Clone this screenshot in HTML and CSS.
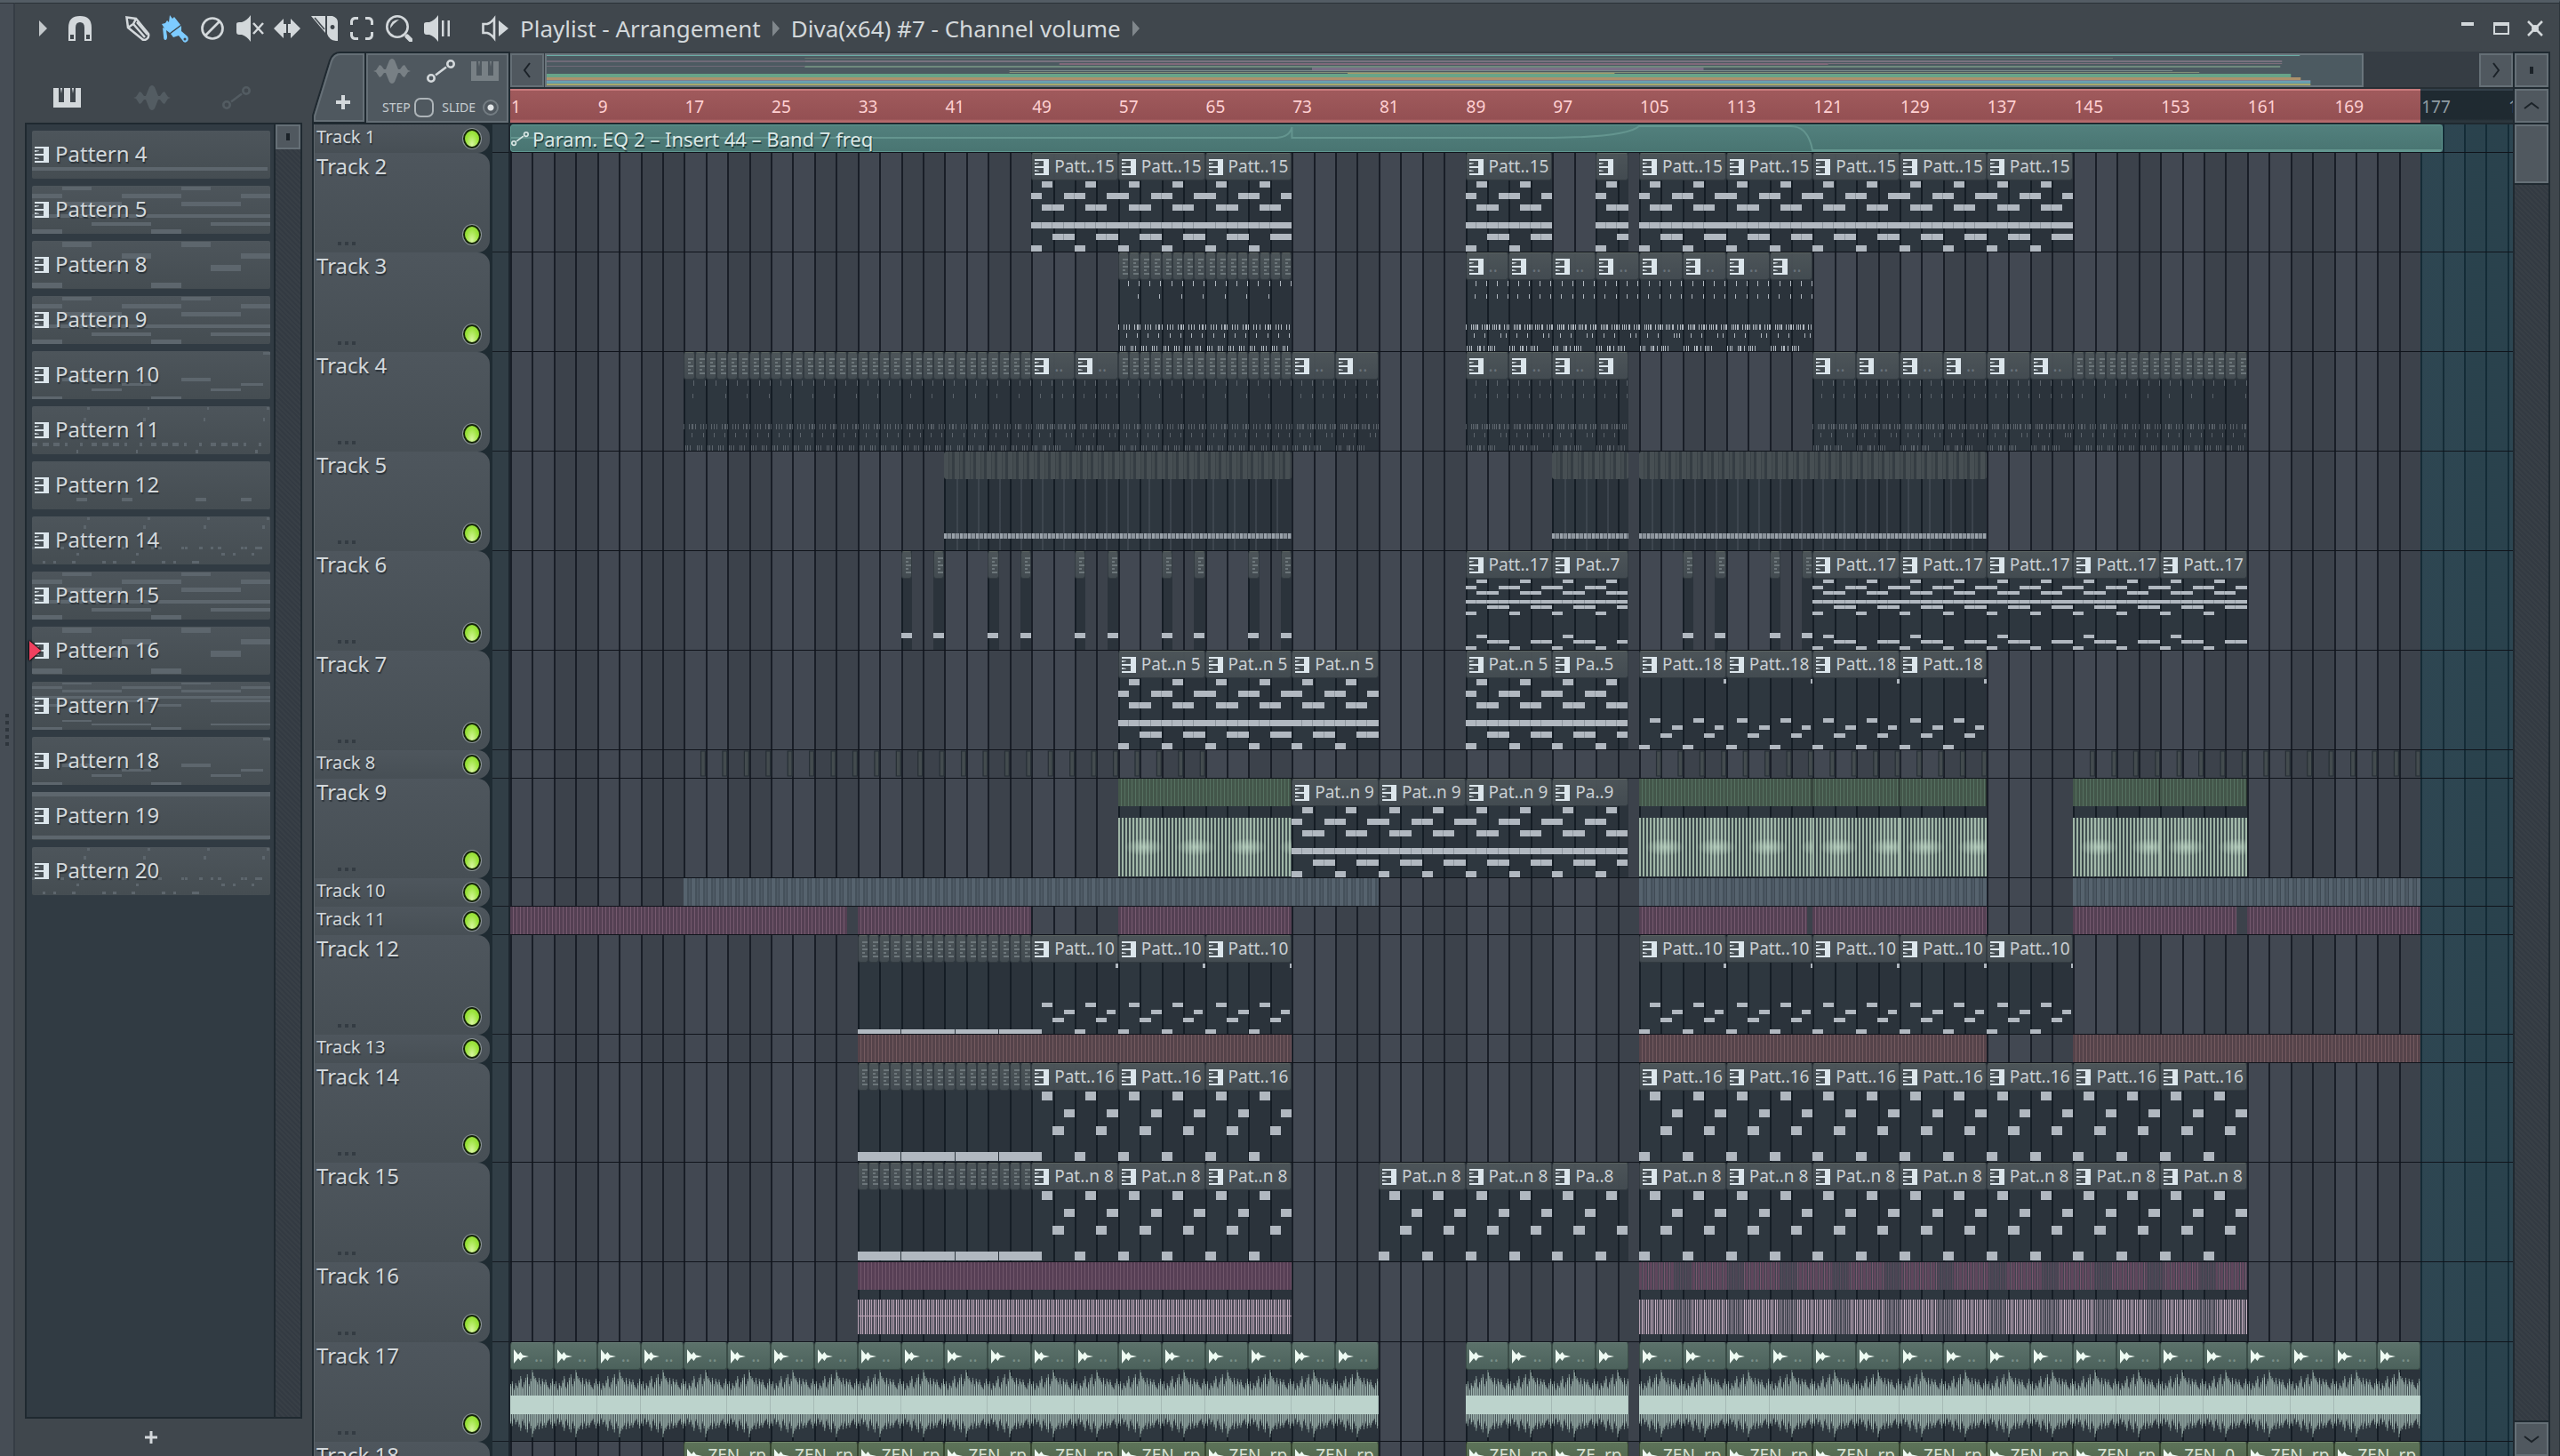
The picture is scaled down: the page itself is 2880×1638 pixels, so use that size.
FILE: index.html
```
<!DOCTYPE html>
<html lang="en">
<head>
  <meta charset="UTF-8" />
  <title>Playlist - Arrangement</title>
  <link rel="stylesheet" href="styles.css">
</head>

<body>
  <!-- shared icons -->
  <svg class="sprite" aria-hidden="true">
    <symbol id="i-keys" viewBox="0 0 16 18">
      <path d="M0 0H16V18H0V16H10V10H0V8H10V2H0z" />
      <path d="M0 4L5 4.500V5L0 6zM0 12L5 13V13.500L0 14z" />
    </symbol>
    <symbol id="i-piano" viewBox="0 0 31 22">
      <path d="M0 0H6V16H12V0H10L9 6 8 0H19V16H25V0H23L22 6 21 0H31V22H0z" />
    </symbol>
    <symbol id="i-wave" viewBox="0 0 42 28">
      <path d="M0 14L3 13 7 7 9 8 12 12 14 12 18 2Q21 -2 24 2L28 12 30 12 33 8 35 7 39 13 42 14 39 15 35 21 33 20 30 16 28 16 24 26Q21 30 18 26L14 16 12 16 9 20 7 21 3 15z" />
    </symbol>
    <symbol id="i-auto" viewBox="0 0 32 26">
      <g fill="none" stroke="currentColor" stroke-width="2.600">
        <circle cx="5" cy="21" r="3.700" /><circle cx="27" cy="5" r="3.700" /><path d="M10 17.500L22 8.500" />
      </g>
    </symbol>
    <symbol id="i-sample" viewBox="0 0 17 16">
      <path d="M0 0L5 6 7.500 3 10 6.500 17 8 10 9.500 7.500 13 5 10 0 16z" />
    </symbol>
  </svg>

  <div class="window">
    <div class="grip"><i></i><i></i><i></i><i></i><i></i></div>

    <div class="main">
      <header class="toolbar">
        <button class="tool menu" aria-label="Menu"><svg width="9" height="18"><path d="M0 0L9 9 0 18z" /></svg></button>
        <button class="tool" aria-label="Snap"><svg width="26" height="28"><path d="M0 28V13Q0 0 13 0T26 13V28H18V13Q18 7 13 7T8 13V28zM2 21V26H6V21zM20 21V26H24V21z" fill-rule="evenodd" /></svg></button>
        <div class="tool-group">
          <button class="tool" aria-label="Draw"><svg width="28" height="28" fill="none"><g fill="none" stroke="currentColor" stroke-width="2.500"><path d="M1.500 1.500L12 3 26 20Q27 24 24 26T19 26L3 13z" /><path d="M12 3L9 9 3 13M9 9L22 24M13 7L25 21" /></g></svg></button>
          <button class="tool paint" aria-label="Paint"><svg width="30" height="31"><path d="M0 10L4 9 6 6 8 8 9 0 12 4 14 2 21 11 9 20 5 17 6 24Q6 28 4 28T2 24L1 14 3 15z" /><path d="M10 21L22 12 22 18 29 24Q31 28 28 30T23 28L19 23 13 25z" /><circle cx="26" cy="27" r="1.500" fill="#40474d" /></svg></button>
          <button class="tool" aria-label="Delete"><svg width="26" height="26"><g fill="none" stroke="currentColor" stroke-width="2.700"><circle cx="13" cy="13" r="11.500" /><path d="M5 21L21 5" /></g></svg></button>
          <button class="tool" aria-label="Mute"><svg width="31" height="30"><path d="M0 10Q0 8 3 8H6Q12 6 16 0V30Q12 24 6 22H3Q0 22 0 19z" /><path d="M19 9L30 21M30 9L19 21" stroke="currentColor" stroke-width="2.500" /></svg></button>
          <button class="tool" aria-label="Slip"><svg width="30" height="24"><path d="M0 12L11 1V7H14V17H11V23zM30 12L19 1V7H16V17H19V23z" /></svg></button>
          <button class="tool" aria-label="Slice"><svg width="30" height="28"><path d="M0 0H16V19zM18 0H24Q30 2 30 7V28H28Q20 27 18 20zM24 10A2.500 2.500 0 1 0 24.100 10z" fill-rule="evenodd" /><path d="M4 2L15 15" stroke="#40474d" stroke-width="1.500" /></svg></button>
          <button class="tool" aria-label="Select"><svg width="26" height="26"><path d="M1.500 9V5Q2 2 5 1.500H9M17 1.500H21Q24 2 24.500 5V9M24.500 17V21Q24 24 21 24.500H17M9 24.500H5Q2 24 1.500 21V17" fill="none" stroke="currentColor" stroke-width="3" /></svg></button>
          <button class="tool" aria-label="Zoom"><svg width="30" height="30"><circle cx="13" cy="13" r="11.700" fill="none" stroke="currentColor" stroke-width="2.600" /><path d="M5 15Q5 5 15 5Q9 9 5 15z" /><path d="M24 24L28 28" stroke="currentColor" stroke-width="5" stroke-linecap="round" /></svg></button>
          <button class="tool" aria-label="Playback"><svg width="29" height="30"><path d="M0 10Q0 8 3 8H6Q12 6 16 0V30Q12 24 6 22H3Q0 22 0 19z" /><path d="M20 6H22.500V24H20zM26.500 6H29V24H26.500z" /></svg></button>
        </div>
        <button class="tool" aria-label="Preview"><svg width="30" height="30"><path d="M1.500 10V20H6Q10 21 14 26V4Q10 9 6 10z" fill="none" stroke="currentColor" stroke-width="2.600" /><path d="M19 6L30 15 19 24z" /></svg></button>
        <nav class="crumbs">
          <a href="#arrangement">Playlist - Arrangement</a>
          <svg width="8" height="18"><path d="M0 0L8 9 0 18z" /></svg>
          <a href="#channel">Diva(x64) #7 - Channel volume</a>
          <svg width="8" height="18"><path d="M0 0L8 9 0 18z" /></svg>
        </nav>
        <div class="window-buttons">
          <button aria-label="Minimize"><svg width="18" height="18"><path d="M2 2H16V6H2z" /></svg></button>
          <button aria-label="Maximize"><svg width="18" height="18"><path d="M0 2H18V16H0zM2 6V14H16V6z" fill-rule="evenodd" /></svg></button>
          <button aria-label="Close"><svg width="18" height="18"><path d="M1 1L17 17M17 1L1 17" stroke="currentColor" stroke-width="2.500" /><circle cx="9" cy="9" r="4" /></svg></button>
        </div>
      </header>

      <div class="content">
        <aside class="picker">
          <div class="picker-tabs">
            <button class="on" aria-label="Patterns"><svg width="31" height="22"><use href="#i-piano" /></svg></button>
            <button aria-label="Audio"><svg width="42" height="28"><use href="#i-wave" /></svg></button>
            <button aria-label="Automation"><svg width="32" height="26"><use href="#i-auto" /></svg></button>
          </div>
          <div class="picker-body">
            <div class="pattern-list" id="patterns"></div>
            <div class="picker-scroll"><button class="scroll-btn" aria-label="Picker scroll"><i class="mark"></i></button></div>
          </div>
          <button class="add-pattern" aria-label="Add pattern"><svg width="14" height="14"><path d="M5.500 0h3v5.500H14v3H8.500V14h-3V8.500H0v-3h5.500z" /></svg></button>
        </aside>

        <section class="playlist">
          <div class="head">
            <div class="add-tab">
              <svg class="tab-shape" viewBox="0 0 60 80" preserveAspectRatio="none"><path d="M1 80V72L20 10Q23 1 32 1H60V80z" fill="#4f585f" stroke="#1f2930" stroke-width="2" /><path d="M3 78V73L22 11Q25 3 32 3H58V78z" fill="none" stroke="#656f76" stroke-width="2" /></svg>
              <button aria-label="Add track"><svg width="16" height="16"><path d="M6 0h4v6h6v4h-6v6H6v-6H0V6h6z" /></svg></button>
            </div>
            <div class="modes">
              <div class="mode-icons">
                <svg width="42" height="28"><use href="#i-wave" /></svg>
                <svg class="on" width="32" height="26"><use href="#i-auto" /></svg>
                <svg width="31" height="22"><use href="#i-piano" /></svg>
              </div>
              <div class="mode-opts">
                <label>STEP<input type="checkbox" class="step"></label>
                <label>SLIDE<input type="radio" class="slide" checked></label>
              </div>
            </div>
            <div class="timeline-head">
              <div class="overview">
                <button class="scroll-btn" aria-label="Scroll left"><svg width="10" height="18"><path d="M8 1L2 9 8 17" /></svg></button>
                <div class="overview-track"><svg id="minimap" viewBox="0 0 2040 34" preserveAspectRatio="none"></svg></div>
                <button class="scroll-btn" aria-label="Scroll right"><svg width="10" height="18"><path d="M2 1L8 9 2 17" /></svg></button>
              </div>
              <div class="ruler" id="ruler"></div>
            </div>
          </div>
          <div id="tracks"></div>
        </section>

        <div class="vscroll">
          <button class="scroll-btn" aria-label="Options"><i class="mark"></i></button>
          <button class="scroll-btn" aria-label="Scroll up"><svg width="18" height="10"><path d="M1 8L9 2 17 8" /></svg></button>
          <div class="thumb"></div>
          <div class="vtrack"></div>
          <button class="scroll-btn" aria-label="Scroll down"><svg width="18" height="10"><path d="M1 2L9 8 17 2" /></svg></button>
        </div>
      </div>
    </div>
  </div>

  <script src="script.js"></script>
</body>
</html>
```
FILE: styles.css
```
* {
  box-sizing: border-box;
}

body {
  margin: 0;
  height: 100vh;
  overflow: hidden;
  background: #40474d;
  color: #d3d8db;
  font-family: "Noto Sans", "Open Sans", sans-serif;
  font-size: 24px;
  line-height: 30px;
}

button {
  display: flex;
  align-items: center;
  justify-content: center;
  padding: 0;
  border: none;
  background: none;
  color: inherit;
  font: inherit;
  cursor: pointer;
}

svg {
  display: block;
  flex: none;
  fill: currentColor;
}

.sprite {
  position: absolute;
  width: 0;
  height: 0;
}

.window {
  display: flex;
  height: 100vh;
  border-top: 3px solid #535c64;
  border-right: 1px solid #2c343a;
}

.grip {
  width: 17px;
  flex: none;
  display: flex;
  flex-direction: column;
  align-items: center;
  justify-content: center;
  gap: 4px;
  background: #464d55;
  border-right: 2px solid #363d45;
  border-top: 1px solid #2b3238;
}

.grip i {
  width: 4px;
  height: 4px;
  background: #2e353c;
}

.main {
  flex: 1;
  min-width: 0;
  display: flex;
  flex-direction: column;
  border-top: 1px solid #2b3238;
}

/* toolbar */
.toolbar {
  height: 54px;
  flex: none;
  display: flex;
  align-items: center;
  padding: 2px 8px 0 10px;
}

.tool {
  width: 42px;
  height: 42px;
}

.menu {
  color: #c3c8cb;
}

.paint {
  color: #7dcbff;
}

.tool-group {
  display: flex;
  margin: 0 24px 0 23px;
}

.crumbs {
  display: flex;
  align-items: center;
  gap: 13px;
  margin-left: 7px;
  font-size: 26px;
  color: #80878c;
}

.crumbs a {
  color: #d3d8db;
  text-decoration: none;
  white-space: nowrap;
}

.window-buttons {
  display: flex;
  margin-left: auto;
}

.window-buttons button {
  width: 38px;
  height: 38px;
}

.content {
  flex: 1;
  min-height: 0;
  display: flex;
}

/* pattern picker */
.picker {
  width: 334px;
  flex: none;
  display: flex;
  flex-direction: column;
  padding: 0 11px;
}

.picker-tabs {
  height: 80px;
  flex: none;
  display: flex;
  padding-top: 24px;
}

.picker-tabs button {
  width: 95px;
  height: 56px;
  color: #535c62;
}

.picker-tabs .on {
  color: #d3d8db;
}

.picker-body {
  flex: 1;
  min-height: 0;
  display: flex;
  border: 2px solid #1f2930;
  background: #313b43;
}

.pattern-list {
  flex: 1;
  display: flex;
  flex-direction: column;
  gap: 8px;
  padding: 7px 4px 0 6px;
}

.pattern {
  position: relative;
  height: 54px;
  justify-content: flex-start;
  gap: 7px;
  padding-left: 3px;
  background: linear-gradient(#4d555b, #454d52);
  border-radius: 2px;
  text-shadow: 1px 2px 1px #2b3238;
}

/* the little note preview lies behind the name */
.pattern .notes {
  position: absolute;
  inset: 0;
  width: 100%;
  height: 100%;
  fill: #5d666d;
}

.pattern .keys,
.pattern span {
  position: relative;
}

.pattern span {
  padding-bottom: 3px;
}

.pattern .keys {
  color: #dce6ec;
}

.selected::before {
  content: "";
  position: absolute;
  left: -3px;
  top: 16px;
  z-index: 1;
  border: 11px solid transparent;
  border-left: 13px solid #f0405f;
  border-right: none;
  filter: drop-shadow(0 0 1px #000) drop-shadow(0 0 1px #000);
}

.picker-scroll,
.vtrack {
  background: repeating-linear-gradient(45deg, #333a42 0 2px, #383f46 2px 4px);
}

.picker-scroll {
  width: 30px;
  border-left: 2px solid #1f2930;
}

.picker-scroll .scroll-btn {
  width: 28px;
  height: 28px;
}

.add-pattern {
  height: 42px;
  flex: none;
  margin-right: 28px;
}

.scroll-btn {
  width: 38px;
  height: 38px;
  flex: none;
  background: #50585f;
  border: 2px solid #656f76;
}

.scroll-btn svg {
  fill: none;
  stroke: #1b2228;
  stroke-width: 2;
}

.mark {
  width: 4px;
  height: 8px;
  background: #1b2228;
}

/* playlist head */
.playlist {
  flex: 1;
  min-width: 0;
  overflow: hidden;
}

.head {
  display: flex;
  height: 82px;
  border-bottom: 2px solid #1f2930;
}

.add-tab {
  position: relative;
  width: 60px;
  flex: none;
}

.tab-shape {
  position: absolute;
  width: 100%;
  height: 100%;
}

.add-tab button {
  position: relative;
  width: 70px;
  height: 114px;
}

.modes {
  width: 160px;
  flex: none;
  background: #4f585f;
  border: 2px solid #656f76;
  outline: 2px solid #1f2930;
  outline-offset: 0;
  margin: 2px 2px 0 1px;
}

.mode-icons {
  display: flex;
  align-items: center;
  justify-content: space-between;
  height: 36px;
  padding: 0 9px 0 6px;
  color: #788085;
}

.mode-icons .on {
  color: #d3d8db;
}

.mode-opts {
  display: flex;
  align-items: center;
  justify-content: space-between;
  height: 42px;
  padding: 4px 9px 0 16px;
}

.mode-opts label {
  display: flex;
  align-items: center;
  gap: 4px;
  font-size: 14px;
  color: #c6ccd0;
}

.mode-opts input {
  appearance: none;
  margin: 0;
  border: 2px solid #adb4b8;
}

.step {
  width: 22px;
  height: 22px;
  border-radius: 7px;
}

.mode-opts .slide {
  width: 18px;
  height: 18px;
  margin-left: 4px;
  border-radius: 50%;
  border: 2px solid #747d83;
  background: radial-gradient(circle, #e2e6e8 0 3px, #50585f 4px);
}

.timeline-head {
  flex: 1;
  min-width: 0;
}

.overview {
  display: flex;
  height: 42px;
  padding: 2px 0;
  background: #363d44;
  border-bottom: 2px solid #262e34;
}

.overview .scroll-btn {
  height: 38px;
}

.overview-track {
  flex: 1;
}

.overview-track svg {
  width: 94%;
  height: 38px;
  margin-left: 1px;
  background: #4c5a61;
  border: 2px solid #6a757c;
}

.ruler {
  display: grid;
  grid-template-columns: repeat(369, minmax(0, 1fr));
  height: 38px;
  overflow: hidden;
  background: linear-gradient(#33404a 0 2px, #1f2a31 2px 34px, #2c373e 36px);
}

.ruler-song {
  grid-column: 1 / 353;
  grid-row: 1;
  height: 38px;
  background: linear-gradient(#c87a7c 0 2px, #a05a5c 2px, #945053 34px, #b56a6c 36px);
}

.ruler span {
  grid-row: 1;
  padding: 5px 0 0 1px;
  font-size: 19px;
  line-height: 30px;
  color: #ffd0d2;
  white-space: nowrap;
}

.ruler .after {
  color: #8f9ca3;
}

/* tracks */
.track {
  display: flex;
  height: 112px;
}

.track.short {
  height: 32px;
}

.track.mid {
  height: 90px;
}

.track-head {
  width: 203px;
  flex: none;
  background: #1f2b32;
  border-left: 2px solid #1f2930;
}

.track-name {
  position: relative;
  width: 198px;
  height: 100%;
  padding-left: 2px;
  border-radius: 0 14px 14px 0;
  border-left: 1px solid #5b646a;
  background: linear-gradient(#4e565d, #474f55);
  text-shadow: 1px 2px 1px #2b3238;
}

.short .track-name {
  font-size: 20px;
  line-height: 28px;
}

/* led and drag dots are pinned to the header's bottom edge */
.led {
  appearance: none;
  position: absolute;
  right: 10px;
  bottom: 9px;
  width: 20px;
  height: 22px;
  margin: 0;
  border: 2px solid #16260a;
  border-radius: 50%;
  outline: 1px solid #8a9296;
  background: radial-gradient(ellipse at 50% 90%, #d9f7a0, #9be33c 60%, #86cf2a);
}

.short .led {
  bottom: 5px;
}

.dots {
  position: absolute;
  left: 26px;
  bottom: 8px;
  width: 20px;
  height: 4px;
  background: repeating-linear-gradient(90deg, #343c43 0 4px, transparent 4px 8px);
}

.short .dots {
  display: none;
}

.gutter {
  width: 20px;
  flex: none;
  background: #313e46;
  border-right: 2px solid #1c252d;
  border-bottom: 1px solid #141a21;
}

.lane {
  --bar: calc(100% / 184.5);
  flex: 1;
  min-width: 0;
  display: grid;
  grid-template-columns: repeat(369, minmax(0, 1fr));
  border-bottom: 1px solid #10141b;
  overflow: hidden;
  background:
    linear-gradient(90deg, transparent calc(var(--bar) * 176), rgba(12, 66, 80, 0.38) 0),
    repeating-linear-gradient(90deg, #191e27 0 2px, transparent 2px calc(var(--bar) * 2)),
    repeating-linear-gradient(90deg, #424852 0 calc(var(--bar) * 4), #3c424b 0 calc(var(--bar) * 8));
}

.clip {
  grid-row: 1;
  display: flex;
  flex-direction: column;
  min-width: 0;
  overflow: hidden;
  background: rgba(16, 28, 34, 0.38);
}

.clip-head {
  display: flex;
  align-items: center;
  height: 31px;
  flex: none;
  gap: 6px;
  padding-left: 3px;
  overflow: hidden;
  white-space: nowrap;
  font-size: 19px;
  color: #c9cfd3;
  background: linear-gradient(rgba(78, 86, 90, 0.95), rgba(68, 76, 82, 0.95));
  border: 1px solid #333b41;
  border-top-color: #59625f;
  border-radius: 3px;
}

.clip-head svg {
  color: #dce6ec;
}

.clip-head span {
  padding-bottom: 2px;
}

.clip-head .more {
  color: #69727a;
}

.clip.mini .clip-head {
  padding-left: 3px;
}

.clip.mini .clip-head svg {
  width: 7px;
  height: 18px;
  fill: none;
  stroke: #6c767a;
  stroke-width: 2;
}

.notes {
  width: 100%;
  height: 80px;
  fill: #b1b8c0;
  shape-rendering: crispEdges;
}

.notes .seam {
  fill: #8f979f;
}

.clip.faded .notes {
  opacity: 0.35;
}

/* hat slices */
.slices {
  grid-row: 1;
  background:
    repeating-linear-gradient(90deg, transparent 0 14px, rgba(80, 88, 98, 0.45) 14px 16px, transparent 16px 24px),
    rgba(16, 28, 34, 0.38);
}

.slices .clip-head {
  padding: 0;
  border: none;
  background: repeating-linear-gradient(90deg, #474f53 0 5px, #3a4247 5px 6px, #444c50 6px 9px, #353d43 9px 12px);
}

.slices .row {
  height: 6px;
  margin-top: 61px;
  background: repeating-linear-gradient(90deg, #9aa2aa 0 3px, #59616a 3px 4px, #8a929a 4px 8px, #444b54 8px 9px);
}

.ticks {
  grid-row: 1;
  width: 100%;
  height: 30px;
  align-self: start;
  fill: #434b4e;
  stroke: #272f36;
  stroke-width: 1;
}

/* stripes of very short audio clips */
.stripe {
  grid-row: 1;
  overflow: hidden;
}

.stripe.slate {
  background: repeating-linear-gradient(90deg, #56636e 0 4px, #45515b 4px 6px, #4e5a65 6px 8px, #3f4a54 8px 9px);
}

.stripe.plum {
  background: repeating-linear-gradient(90deg, #544053 0 3px, #75596e 3px 4px);
}

.stripe.rust {
  background: repeating-linear-gradient(90deg, #55434a 0 3px, #735a5f 3px 4px);
}

.stripe.green,
.stripe.pink,
.stripe.pink2 {
  background: rgba(16, 28, 34, 0.38);
}

.stripe-head {
  height: 31px;
}

.green .stripe-head {
  background: repeating-linear-gradient(90deg, #43564a 0 3px, #557060 3px 4px);
  border-right: 1px solid #27312d;
}

.pink .stripe-head {
  background: repeating-linear-gradient(90deg, #573f55 0 3px, #70566a 3px 4px);
}

.pink2 .stripe-head {
  background:
    repeating-linear-gradient(90deg, transparent 0 40px, rgba(61, 68, 78, 0.55) 40px 59px),
    repeating-linear-gradient(90deg, #5f465c 0 3px, #3f4550 3px 4px, #76586c 4px 5px, #4a4353 5px 6px);
}

.green .stripe-wave {
  height: 66px;
  margin-top: 13px;
  background:
    radial-gradient(ellipse at center, rgba(190, 216, 198, 0.7), transparent 55%) 0 20px / 58px 26px repeat-x,
    linear-gradient(90deg, transparent 10px, rgba(190, 216, 198, 0.25) 28px, transparent 46px) 0 0 / 58px 100%,
    repeating-linear-gradient(90deg, #9fb5a6 0 2px, #39464a 2px 4px);
}

.pink .stripe-wave,
.pink2 .stripe-wave {
  height: 39px;
  margin-top: 11px;
  background:
    linear-gradient(transparent 18px, #b9a0b3 18px 19px, transparent 19px),
    repeating-linear-gradient(90deg, #b5a0b2 0 1px, #4a4a56 1px 3px, #c8b3c4 3px 4px, #4a4a56 4px 5px);
}

.pink2 .stripe-wave {
  background:
    repeating-linear-gradient(90deg, transparent 0 40px, rgba(61, 68, 78, 0.4) 40px 59px),
    repeating-linear-gradient(90deg, #b5a0b2 0 1px, #4a4a56 1px 3px, #c8b3c4 3px 4px, #4a4a56 4px 5px);
}

/* drum loop */
.loop .clip-head {
  background: linear-gradient(#5b716a, #4c625c);
  border-color: #3a4c47;
  border-top-color: #6b827a;
}

.loop .clip-head svg,
.zen .clip-head svg {
  color: #eefaf2;
}

.loop .clip-head .more {
  color: #7a8f88;
}

.wave {
  width: 100%;
  height: 80px;
  fill: #bcd3cc;
}

.wave .thin {
  fill: #829692;
}

.zen .clip-head {
  background: linear-gradient(#5d7359, #4f644c);
  border-color: #36452f;
  border-top-color: #748a6c;
  color: #d6e0d2;
}

/* automation clip */
.automation {
  grid-row: 1;
  display: grid;
  min-width: 0;
  height: 31px;
  border: 1px solid #5f9790;
  border-radius: 3px;
  background: linear-gradient(#52807d, #497572);
}

.automation svg,
.automation div {
  grid-area: 1 / 1;
}

.automation .curve {
  width: 100%;
  height: 29px;
  fill: none;
  stroke: #64958f;
  stroke-width: 2;
}

.automation div {
  display: flex;
  align-items: center;
  gap: 4px;
  font-size: 22px;
  line-height: 26px;
  color: #dbe8e6;
  text-shadow: 1px 2px 0 #24403e;
}

/* right scrollbar */
.vscroll {
  width: 52px;
  flex: none;
  display: flex;
  flex-direction: column;
  gap: 2px;
  padding: 2px 0 0 2px;
  background: linear-gradient(90deg, #1f2930 0 42px, #40474d 42px);
}

.thumb {
  width: 38px;
  height: 66px;
  flex: none;
  background: #50585f;
  border: 2px solid #656f76;
}

.vtrack {
  width: 38px;
  flex: 1;
}
```
FILE: script.js
```
// note rows: [y, height, [[start bar, length], ...]] on an 80px tall roll, 8 bars long
const CHORDS = [
  [1, 7, [[1, 1], [5, 1]]],
  [14, 7, [[0, 1], [3, 2], [7, 1]]],
  [27, 7, [[1, 2], [5, 2]]],
  [47, 7, [[0, 8]]],
  [60, 7, [[2, 2], [6, 2]]],
  [73, 7, [[0, 1], [4, 1]]]
];
const WIDE = [
  [1, 4, [[1, 1], [5, 1]]],
  [8, 4, [[0, 1], [3, 2], [7, 1]]],
  [14, 4, [[1, 2], [5, 2]]],
  [24, 4, [[0, 8]]],
  [30, 4, [[2, 2], [6, 2]]],
  [37, 4, [[0, 1], [4, 1]]],
  [63, 4, [[1, 1]]],
  [69, 4, [[2, 2], [6, 2]]],
  [76, 4, [[0, 1], [4, 1]]]
];
const LEAD = [
  [1, 5, [[7.75, 0.25]]],
  [45, 5, [[1, 1], [5, 1]]],
  [53, 5, [[3, 1], [7, 0.75]]],
  [62, 5, [[2, 1], [6, 1]]],
  [75, 5, [[0, 1], [4, 1]]]
];
const BASS = [
  [1, 10, [[1, 1], [5, 1]]],
  [21, 9, [[3, 1], [7, 1]]],
  [40, 10, [[2, 1], [6, 1]]],
  [69, 10, [[0, 1], [4, 1]]]
];

const ticks = (y, h, list, w = 0.08) => [y, h, list.map(x => [x, w])];
const DRUMS = [
  ticks(1, 6, [0.9, 1.9, 2.9, 3.88]),
  ticks(16, 5, [0.85, 1.87, 2.87, 3.85]),
  ticks(50, 6, [0, 0.5, 0.62, 0.8, 1, 1.1, 1.5, 1.7, 1.85, 2, 2.1, 2.45, 2.6, 2.8, 3, 3.1, 3.5, 3.75, 3.9]),
  ticks(60, 5, [0.72, 1.72, 3.2, 3.4, 3.65]),
  ticks(74, 6, [0.1, 0.3, 0.5, 1.05, 1.2, 1.35, 1.6, 2.05, 2.2, 2.4, 2.65])
];
const DRUM1 = [
  ticks(1, 6, [0.88]),
  ticks(16, 5, [0.86]),
  ticks(50, 6, [0, 0.5, 0.7, 0.86]),
  ticks(60, 5, [0.7]),
  ticks(74, 6, [0.14, 0.3, 0.6])
];
const HIT = (y, h) => [[y, h, [[0, 1]]]];

// previews that only the picker shows
const LONG4 = [[60, 6, [[0, 7.9]]]];
const LONG19 = [[0, 7, [[0, 8]]], [73, 6, [[0, 8]]]];
const PERC12 = [[61, 6, [[1.48, 0.38], [3, 0.36], [5.5, 0.36], [7, 0.36]]]];
const PERC11 = [
  ticks(1, 5, [1.85, 3.87, 5.87, 7.88]),
  ticks(19, 6, [1.73, 3.73, 5.75, 7.75]),
  [61, 6, [0, 2, 4, 6].flatMap(b => [[b, 0.18], [b + 0.36, 0.2], [b + 0.72, 0.2], [b + 1.1, 0.08], [b + 1.62, 0.08]])],
  ticks(73, 6, [1.48, 3.48, 5.5, 7.5])
];
const PERC14 = [
  ticks(1, 5, [1.85, 3.87, 5.87, 7.88], 0.1),
  ticks(15, 5, [1.73, 3.73, 5.75, 7.73], 0.1),
  ticks(50, 5, [0, 0.97, 1.35, 1.65, 2, 2.25, 3, 3.12, 4, 4.25, 5, 5.12, 5.62, 6, 6.25, 7, 7.12, 7.5, 7.62], 0.1),
  ticks(60, 5, [1.48, 3.48, 6.37, 6.75, 7.37], 0.1),
  ticks(74, 5, [0.35, 0.72, 1.35, 2.37, 2.73, 3.35, 4.37, 4.75, 5.38, 5.5], 0.1)
];

const patterns = [
  [4, LONG4], [5, CHORDS], [8, BASS], [9, CHORDS], [10, LEAD], [11, PERC11], [12, PERC12],
  [14, PERC14], [15, CHORDS], [16, BASS], [17, WIDE], [18, LEAD], [19, LONG19], [20, PERC14]
];

function notesSvg(rows, len) {
  let out = "";
  for (const [y, h, list] of rows) {
    for (const [x, w] of list) {
      if (x >= len) continue;
      const width = Math.min(w, len - x);
      out += `<rect x="${x}" y="${y}" width="${width}" height="${h}"/>`;
      for (let s = 1; s < width; s++) {
        out += `<rect class="seam" x="${x + s - 0.08}" y="${y}" width="0.08" height="${h}"/>`;
      }
    }
  }
  return `<svg class="notes" viewBox="0 0 ${len} 80" preserveAspectRatio="none">${out}</svg>`;
}

const keysIcon = '<svg class="keys" width="16" height="18"><use href="#i-keys"/></svg>';
const sampleIcon = '<svg width="17" height="16"><use href="#i-sample"/></svg>';
const miniIcon = '<svg viewBox="0 0 7 18"><path d="M1 1h6M1 5h3M1 9h6M1 13h3M1 17h6"/></svg>';

// bars are counted from 1, the lane grid has two columns to a bar
const place = (bar, len) => `style="grid-column: ${(bar - 1) * 2 + 1} / span ${len * 2}"`;

function midi(bar, len, label, rows, cls = "") {
  const text = label === ".." ? '<span class="more">..</span>' : `<span>${label}</span>`;
  return `<div class="clip ${cls}" ${place(bar, len)}><div class="clip-head">${keysIcon}${text}</div>${notesSvg(rows, len)}</div>`;
}

function run(bars, len, label, rows, cls) {
  return bars.map(b => midi(b, len, label, rows, cls)).join("");
}

function mini(bars, rows, cls = "") {
  return bars.map(b =>
    `<div class="clip mini ${cls}" ${place(b, 1)}><div class="clip-head">${miniIcon}</div>${notesSvg(rows, 1)}</div>`
  ).join("");
}

const range = (from, to, step) => {
  const list = [];
  for (let i = from; i < to; i += step) list.push(i);
  return list;
};

const stripe = (cls, spans) => spans.map(([from, to]) =>
  `<div class="stripe ${cls}" ${place(from, to - from)}></div>`).join("");

const audio = (cls, spans) => spans.map(([from, to]) =>
  `<div class="stripe ${cls}" ${place(from, to - from)}><div class="stripe-head"></div><div class="stripe-wave"></div></div>`).join("");

const slices = spans => spans.map(([from, to]) =>
  `<div class="slices" ${place(from, to - from)}><div class="clip-head"></div><div class="row"></div></div>`).join("");

// a short clip at the end of every second bar
function tails(from, to) {
  const rects = range(0, to - from, 2).map(b => `<rect x="${(b + 1.6) * 10}" y="1" width="4" height="28"/>`).join("");
  return `<svg class="ticks" ${place(from, to - from)} viewBox="0 0 ${(to - from) * 10} 30" preserveAspectRatio="none">${rects}</svg>`;
}

function waveSvg(len) {
  const peaks = [20, 23, 15, 21, 18, 24, 29, 17, 22, 27, 31, 20, 26, 37, 29, 27, 22, 27, 20, 26, 22, 25, 19, 16, 21, 26];
  let thin = "", solid = "";
  for (let i = 0; i < Math.ceil(len * 6.5); i++) {
    const p = peaks[i % peaks.length] + 4;
    const x = i * 8;
    thin += `M${x} ${40 - p}h4V${39 + p * 0.9}h-4z`;
    solid += `M${x + 2} ${40 - p * 0.9}h3V${39 + p * 0.8}h-3z`;
  }
  return `<svg class="wave" viewBox="0 0 ${len * 52} 80" preserveAspectRatio="none"><path class="thin" d="${thin}"/><path d="${solid}M0 29H${len * 52}V50H0z"/></svg>`;
}

const loop = (bar, len) =>
  `<div class="clip loop" ${place(bar, len)}><div class="clip-head">${sampleIcon}${len > 3 ? '<span class="more">..</span>' : ""}</div>${waveSvg(len)}</div>`;

const zen = (bar, len, label) =>
  `<div class="clip zen" ${place(bar, len)}><div class="clip-head">${sampleIcon}<span>${label}</span></div></div>`;

const automation = `<div class="automation" ${place(1, 178)}>
  <svg class="curve" viewBox="0 0 1780 29" preserveAspectRatio="none"><path vector-effect="non-scaling-stroke" d="M0 14H706Q718 13 720 2V14H960Q1030 13 1040 1H1180Q1196 1 1200 28H1780"/></svg>
  <div><svg width="20" height="18"><use href="#i-auto"/></svg>Param. EQ 2 – Insert 44 – Band 7 freq</div>
</div>`;

const tracks = [
  ["short", automation],
  ["", run([49, 57, 65, 89], 8, "Patt..15", CHORDS) + midi(101, 3, "", CHORDS) + run(range(105, 145, 8), 8, "Patt..15", CHORDS)],
  ["", mini(range(57, 73, 1), DRUM1) + run(range(89, 121, 4), 4, "..", DRUMS)],
  ["", mini(range(17, 49, 1), DRUM1, "faded") + run([49, 53], 4, "..", DRUMS, "faded") + mini(range(57, 73, 1), DRUM1, "faded") +
    run([73, 77, 89, 93, 97], 4, "..", DRUMS, "faded") + midi(101, 3, "", DRUMS, "faded") +
    run(range(121, 145, 4), 4, "..", DRUMS, "faded") + mini(range(145, 161, 1), DRUM1, "faded")],
  ["", slices([[41, 73], [97, 104], [105, 137]])],
  ["", mini([37, 40, 45, 48, 53, 56, 61, 64, 69, 72], HIT(61, 6)) + midi(89, 8, "Patt..17", WIDE) + midi(97, 7, "Pat..7", WIDE) +
    mini([109, 112, 117, 120], HIT(61, 6)) + run(range(121, 161, 8), 8, "Patt..17", WIDE)],
  ["", run([57, 65, 73, 89], 8, "Pat..n 5", CHORDS) + midi(97, 7, "Pa..5", CHORDS) + run(range(105, 137, 8), 8, "Patt..18", LEAD)],
  ["short", tails(17, 65) + tails(105, 137) + tails(145, 177)],
  ["", audio("green", [[57, 73]]) + run([73, 81, 89], 8, "Pat..n 9", CHORDS) + midi(97, 7, "Pa..9", CHORDS) +
    audio("green", [[105, 121], [121, 129], [129, 137], [145, 153], [153, 161]])],
  ["short", stripe("slate", [[17, 81], [105, 137], [145, 177]])],
  ["short", stripe("plum", [[1, 32], [33, 49], [57, 73], [105, 120.5], [121, 137], [145, 160], [161, 177]])],
  ["", mini(range(33, 49, 1), HIT(75, 5)) + run([49, 57, 65, ...range(105, 145, 8)], 8, "Patt..10", LEAD)],
  ["short", stripe("rust", [[33, 73], [105, 137], [145, 177]])],
  ["", mini(range(33, 49, 1), HIT(69, 10)) + run([49, 57, 65, ...range(105, 161, 8)], 8, "Patt..16", BASS)],
  ["", mini(range(33, 49, 1), HIT(69, 10)) + run([49, 57, 65, 81, 89, ...range(105, 161, 8)], 8, "Pat..n 8", BASS) +
    midi(97, 7, "Pa..8", BASS)],
  ["mid", audio("pink", [[33, 73]]) + audio("pink2", [[105, 161]])],
  ["", range(1, 81, 4).map(b => loop(b, 4)).join("") + [89, 93, 97].map(b => loop(b, 4)).join("") + loop(101, 3) +
    range(105, 177, 4).map(b => loop(b, 4)).join("")],
  ["", range(17, 81, 8).map(b => zen(b, 8, "ZEN..rp")).join("") + zen(89, 8, "ZEN..rp") + zen(97, 7, "ZE..rp") +
    range(105, 177, 8).map(b => zen(b, 8, b === 153 ? "ZEN..0" : "ZEN..rp")).join("")]
];

document.getElementById("patterns").innerHTML = patterns.map(([n, rows]) =>
  `<button class="pattern${n === 16 ? " selected" : ""}">${notesSvg(rows, 8).replace(/<rect class="seam"[^>]*>/g, "")}${keysIcon}<span>Pattern ${n}</span></button>`
).join("");

document.getElementById("ruler").innerHTML = '<div class="ruler-song"></div>' + range(1, 186, 8).map(n =>
  `<span${n > 176 ? ' class="after"' : ""} style="grid-column: ${(n - 1) * 2 + 1}">${n}</span>`
).join("");

document.getElementById("tracks").innerHTML = tracks.map(([size, clips], i) => `
  <div class="track ${size}">
    <div class="track-head"><div class="track-name">Track ${i + 1}
      <i class="dots"></i><input type="checkbox" class="led" aria-label="Track ${i + 1} on" checked></div></div>
    <div class="gutter"></div>
    <div class="lane">${clips}</div>
  </div>`).join("");

// overview of the whole arrangement: [y, height, from, to, colour]
const mapLines = [
  [0, 1, 0, 1970, "#6aada6"], [3, 1, 290, 1760, "#66736f"], [6, 2, 0, 290, "#6f6a78"], [6, 2, 290, 1950, "#78727f"],
  [9, 2, 576, 1440, "#80697a"], [9, 1, 1440, 1950, "#7d6e7b"], [12, 2, 290, 1948, "#6f8a7d"], [12, 1, 0, 290, "#706a78"],
  [14, 3, 860, 1300, "#796f86"], [17, 1, 520, 1827, "#768a8a"], [19, 1, 520, 1857, "#839077"],
  [20, 1, 900, 1200, "#a49a6a"], [21, 4, 0, 1960, "#68a488"], [25, 3, 0, 1971, "#ad916b"],
  [28, 1, 0, 1982, "#7f7f92"], [29, 2, 0, 1982, "#6ba1b2"], [31, 1, 0, 1982, "#5d93a8"], [32, 2, 0, 1982, "#a7a76c"]
];
document.getElementById("minimap").innerHTML = mapLines.map(([y, h, from, to, fill]) =>
  `<rect x="${from}" y="${y}" width="${to - from}" height="${h}" fill="${fill}"/>`
).join("");
```
